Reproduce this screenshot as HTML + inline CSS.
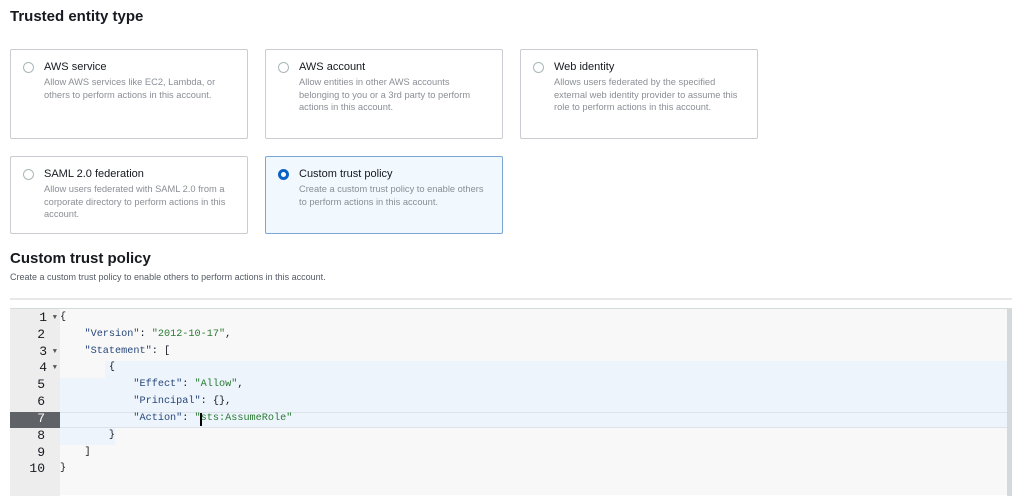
<!DOCTYPE html>
<html><head><meta charset="utf-8"><style>
*{margin:0;padding:0;box-sizing:border-box}
body{width:1024px;height:495px;overflow:hidden;background:#fff;font-family:"Liberation Sans",Arial,sans-serif;position:relative;color:#16191f}
.h{position:absolute;font-weight:bold;font-size:15px;color:#16191f}
.card{position:absolute;width:238px;border:1px solid #c9ccd0;border-radius:2px;background:#fff}
.card.sel{background:#f1f8fe;border-color:#7aa7d6}
.r{position:absolute;left:12px;top:12px;width:11px;height:11px;border:1px solid #aab7b8;border-radius:50%;background:#fff}
.sel .r{border:3px solid #0b62c4}
.t{position:absolute;left:33px;top:11px;font-size:11px;color:#16191f}
.d{position:absolute;left:33px;top:26px;font-size:9.3px;line-height:12.6px;color:#8a8f96;width:188px}
.ed{position:absolute;left:10px;top:308px;width:1002px;height:187px;background:#f8f8f8;border-top:1px solid #d5dbdb}
.gut{position:absolute;left:0;top:0;width:50px;height:187px;background:#ededed}
.ln{position:absolute;left:0;width:50px;height:16.8px;font-family:"Liberation Mono",monospace;font-size:13px;line-height:16.8px;color:#16191f}
.ln span{position:absolute;right:15px}
.ln i{position:absolute;right:3px;top:0;font-style:normal;font-size:7px;color:#555}
.code{position:absolute;left:50px;height:16.8px;font-family:"Liberation Mono",monospace;font-size:10.2px;line-height:16.8px;white-space:pre;color:#16191f}
.k{color:#27477a}.s{color:#2a7a33}
.hl{position:absolute;background:#edf4fc}
.sb{position:absolute;right:0;top:0;width:5px;height:187px;background:#d5d9dc}
</style></head><body>
<div class="h" style="left:10px;top:8px">Trusted entity type</div>

<div class="card" style="left:10px;top:49px;height:90px"><div class="r"></div><div class="t">AWS service</div><div class="d">Allow AWS services like EC2, Lambda, or others to perform actions in this account.</div></div>
<div class="card" style="left:265px;top:49px;height:90px"><div class="r"></div><div class="t">AWS account</div><div class="d">Allow entities in other AWS accounts belonging to you or a 3rd party to perform actions in this account.</div></div>
<div class="card" style="left:520px;top:49px;height:90px"><div class="r"></div><div class="t">Web identity</div><div class="d">Allows users federated by the specified external web identity provider to assume this role to perform actions in this account.</div></div>
<div class="card" style="left:10px;top:156px;height:78px"><div class="r"></div><div class="t">SAML 2.0 federation</div><div class="d">Allow users federated with SAML 2.0 from a corporate directory to perform actions in this account.</div></div>
<div class="card sel" style="left:265px;top:156px;height:78px"><div class="r"></div><div class="t">Custom trust policy</div><div class="d">Create a custom trust policy to enable others to perform actions in this account.</div></div>

<div class="h" style="left:10px;top:250px">Custom trust policy</div>
<div style="position:absolute;left:10px;top:272px;font-size:9px;color:#545b64">Create a custom trust policy to enable others to perform actions in this account.</div>
<div style="position:absolute;left:10px;top:298px;width:1002px;height:2px;background:#e6e8ea"></div>

<div class="ed">
<div class="gut"></div>
<div class="hl" style="left:95px;top:52px;width:902px;height:17px"></div>
<div class="hl" style="left:50px;top:69px;width:947px;height:34px"></div>
<div class="hl" style="left:50px;top:103px;width:947px;height:16px;border-top:1px solid #dde3ea;border-bottom:1px solid #dde3ea"></div>
<div class="hl" style="left:50px;top:119px;width:55px;height:17px"></div>
<div style="position:absolute;left:0;top:103px;width:50px;height:16px;background:#5f6368"></div>
<div class="sb"></div>

<div class="ln" style="top:1px"><span style="right:13px">1</span><i>▼</i></div>
<div class="ln" style="top:18px"><span>2</span></div>
<div class="ln" style="top:35px"><span style="right:13px">3</span><i>▼</i></div>
<div class="ln" style="top:51px"><span style="right:13px">4</span><i>▼</i></div>
<div class="ln" style="top:68px"><span>5</span></div>
<div class="ln" style="top:85px"><span>6</span></div>
<div class="ln" style="top:102px;color:#fff"><span>7</span></div>
<div class="ln" style="top:119px"><span>8</span></div>
<div class="ln" style="top:136px"><span>9</span></div>
<div class="ln" style="top:152px"><span>10</span></div>

<div class="code" style="top:1px">{</div>
<div class="code" style="top:18px">    <span class="k">"Version"</span>: <span class="s">"2012-10-17"</span>,</div>
<div class="code" style="top:35px">    <span class="k">"Statement"</span>: [</div>
<div class="code" style="top:51px">        {</div>
<div class="code" style="top:68px">            <span class="k">"Effect"</span>: <span class="s">"Allow"</span>,</div>
<div class="code" style="top:85px">            <span class="k">"Principal"</span>: {},</div>
<div class="code" style="top:102px">            <span class="k">"Action"</span>: <span class="s">"sts:AssumeRole"</span></div>
<div style="position:absolute;left:190px;top:104px;width:1.5px;height:13px;background:#000"></div>
<div class="code" style="top:119px">        }</div>
<div class="code" style="top:136px">    ]</div>
<div class="code" style="top:152px">}</div>
</div>
</body></html>
